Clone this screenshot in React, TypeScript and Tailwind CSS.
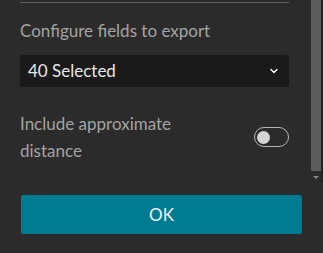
import { ChevronDown } from 'lucide-react'

export default function App() {
  return (
    <div
      className="flex h-[253px] w-[323px] flex-col overflow-hidden bg-[#2b2b2b]"
      style={{ fontFamily: 'Lato, "Open Sans", sans-serif' }}
    >
      {/* scroll area */}
      <div className="flex h-[182px] shrink-0">
        <div className="w-[311px] shrink-0 pl-5 pr-[22px]">
          <div className="mt-[2px] h-px bg-[#5c5c5c]" />
          <p className="mt-[16px] text-[17px] leading-6 text-[#a3a3a3]">Configure fields to export</p>
          <button
            type="button"
            className="mt-[12px] flex h-8 w-full items-center justify-between rounded-[2px] bg-[#1a1a1a] pl-[8px] pr-[9px] text-[17px] text-[#e6e6e6]"
          >
            <span>40 Selected</span>
            <ChevronDown className="h-3 w-3 text-white" strokeWidth={2.75} />
          </button>
          <div className="mt-[23px] flex items-center justify-between">
            <p className="text-[17px] leading-[27px] text-[#a3a3a3]">
              Include approximate
              <br />
              distance
            </p>
            <div className="flex h-5 w-[35px] items-center rounded-full border-[1.5px] border-[#b5b5b5] px-[1.5px]">
              <div className="h-[13px] w-[13px] rounded-full bg-[#d4d4d4]" />
            </div>
          </div>
        </div>
        {/* scrollbar */}
        <div className="flex w-[10px] shrink-0 flex-col items-center">
          <div className="h-[171px] w-full bg-[#5c5c5c]" />
          <div className="mt-[5px] h-0 w-0 border-x-[3px] border-t-[3px] border-x-transparent border-t-[#8a8a8a]" />
        </div>
        <div className="w-[2px] shrink-0 bg-[#222]" />
      </div>
      <div className="px-[21px] pt-[13px]">
        <button
          type="button"
          className="flex h-[39px] w-full items-center justify-center rounded-[2px] bg-[#007c92] text-[17px] text-[#f0f0f0]"
        >
          OK
        </button>
      </div>
    </div>
  )
}
